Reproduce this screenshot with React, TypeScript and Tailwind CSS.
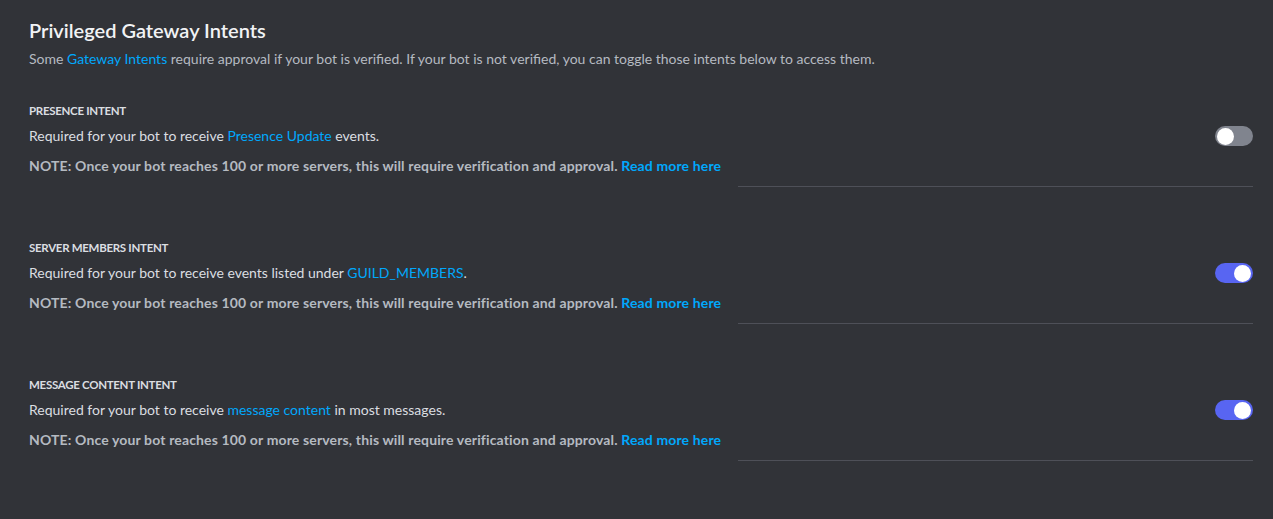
import React from 'react';

interface IntentProps {
  title: string;
  before: string;
  link: string;
  after: string;
  enabled: boolean;
  first?: boolean;
}

const Toggle: React.FC<{ on: boolean }> = ({ on }) => (
  <div
    className={`relative w-[38px] h-[20px] rounded-full shrink-0 ${
      on ? 'bg-[#5865f2]' : 'bg-[#80848e]'
    }`}
  >
    <div
      className={`absolute top-[1.5px] w-[17px] h-[17px] rounded-full bg-white ${
        on ? 'right-[2px]' : 'left-[2px]'
      }`}
    />
  </div>
);

const Intent: React.FC<IntentProps> = ({ title, before, link, after, enabled, first }) => (
  <div className={first ? 'mt-[34px]' : 'mt-[53px]'}>
    <div className="text-[11.5px] leading-[16px] font-bold uppercase tracking-[-0.3px] text-[#dbdee1]">
      {title}
    </div>
    <div className="mt-[7px] flex items-center justify-between">
      <div className="text-[14px] leading-[20px] text-[#dbdee1]">
        {before}
        <a href="#" className="text-[#00a8fc]">{link}</a>
        {after}
      </div>
      <Toggle on={enabled} />
    </div>
    <div className="mt-[10px] text-[14px] leading-[20px] font-bold tracking-[0.14px] text-[#b5bac1]">
      NOTE: Once your bot reaches 100 or more servers, this will require verification and approval.{' '}
      <a href="#" className="text-[#00a8fc]">Read more here</a>
    </div>
    <div className="mt-[10px] ml-auto w-[515px] h-px bg-[#4e5058]" />
  </div>
);

export default function App() {
  return (
    <div
      className="min-h-[519px] bg-[#313338] pl-[29px] pr-[20px] pt-[18px]"
      style={{ fontFamily: 'Lato, "Noto Sans", sans-serif' }}
    >
      <h2 className="text-[20px] leading-[24px] font-semibold text-[#f2f3f5]">
        Privileged Gateway Intents
      </h2>
      <p className="mt-[7px] text-[14px] leading-[20px] text-[#b5bac1]">
        Some <a href="#" className="text-[#00a8fc]">Gateway Intents</a> require approval if your bot is verified. If your bot is not verified, you can toggle those intents below to access them.
      </p>
      <Intent
        first
        title="Presence Intent"
        before="Required for your bot to receive "
        link="Presence Update"
        after=" events."
        enabled={false}
      />
      <Intent
        title="Server Members Intent"
        before="Required for your bot to receive events listed under "
        link="GUILD_MEMBERS"
        after="."
        enabled={true}
      />
      <Intent
        title="Message Content Intent"
        before="Required for your bot to receive "
        link="message content"
        after=" in most messages."
        enabled={true}
      />
    </div>
  );
}
